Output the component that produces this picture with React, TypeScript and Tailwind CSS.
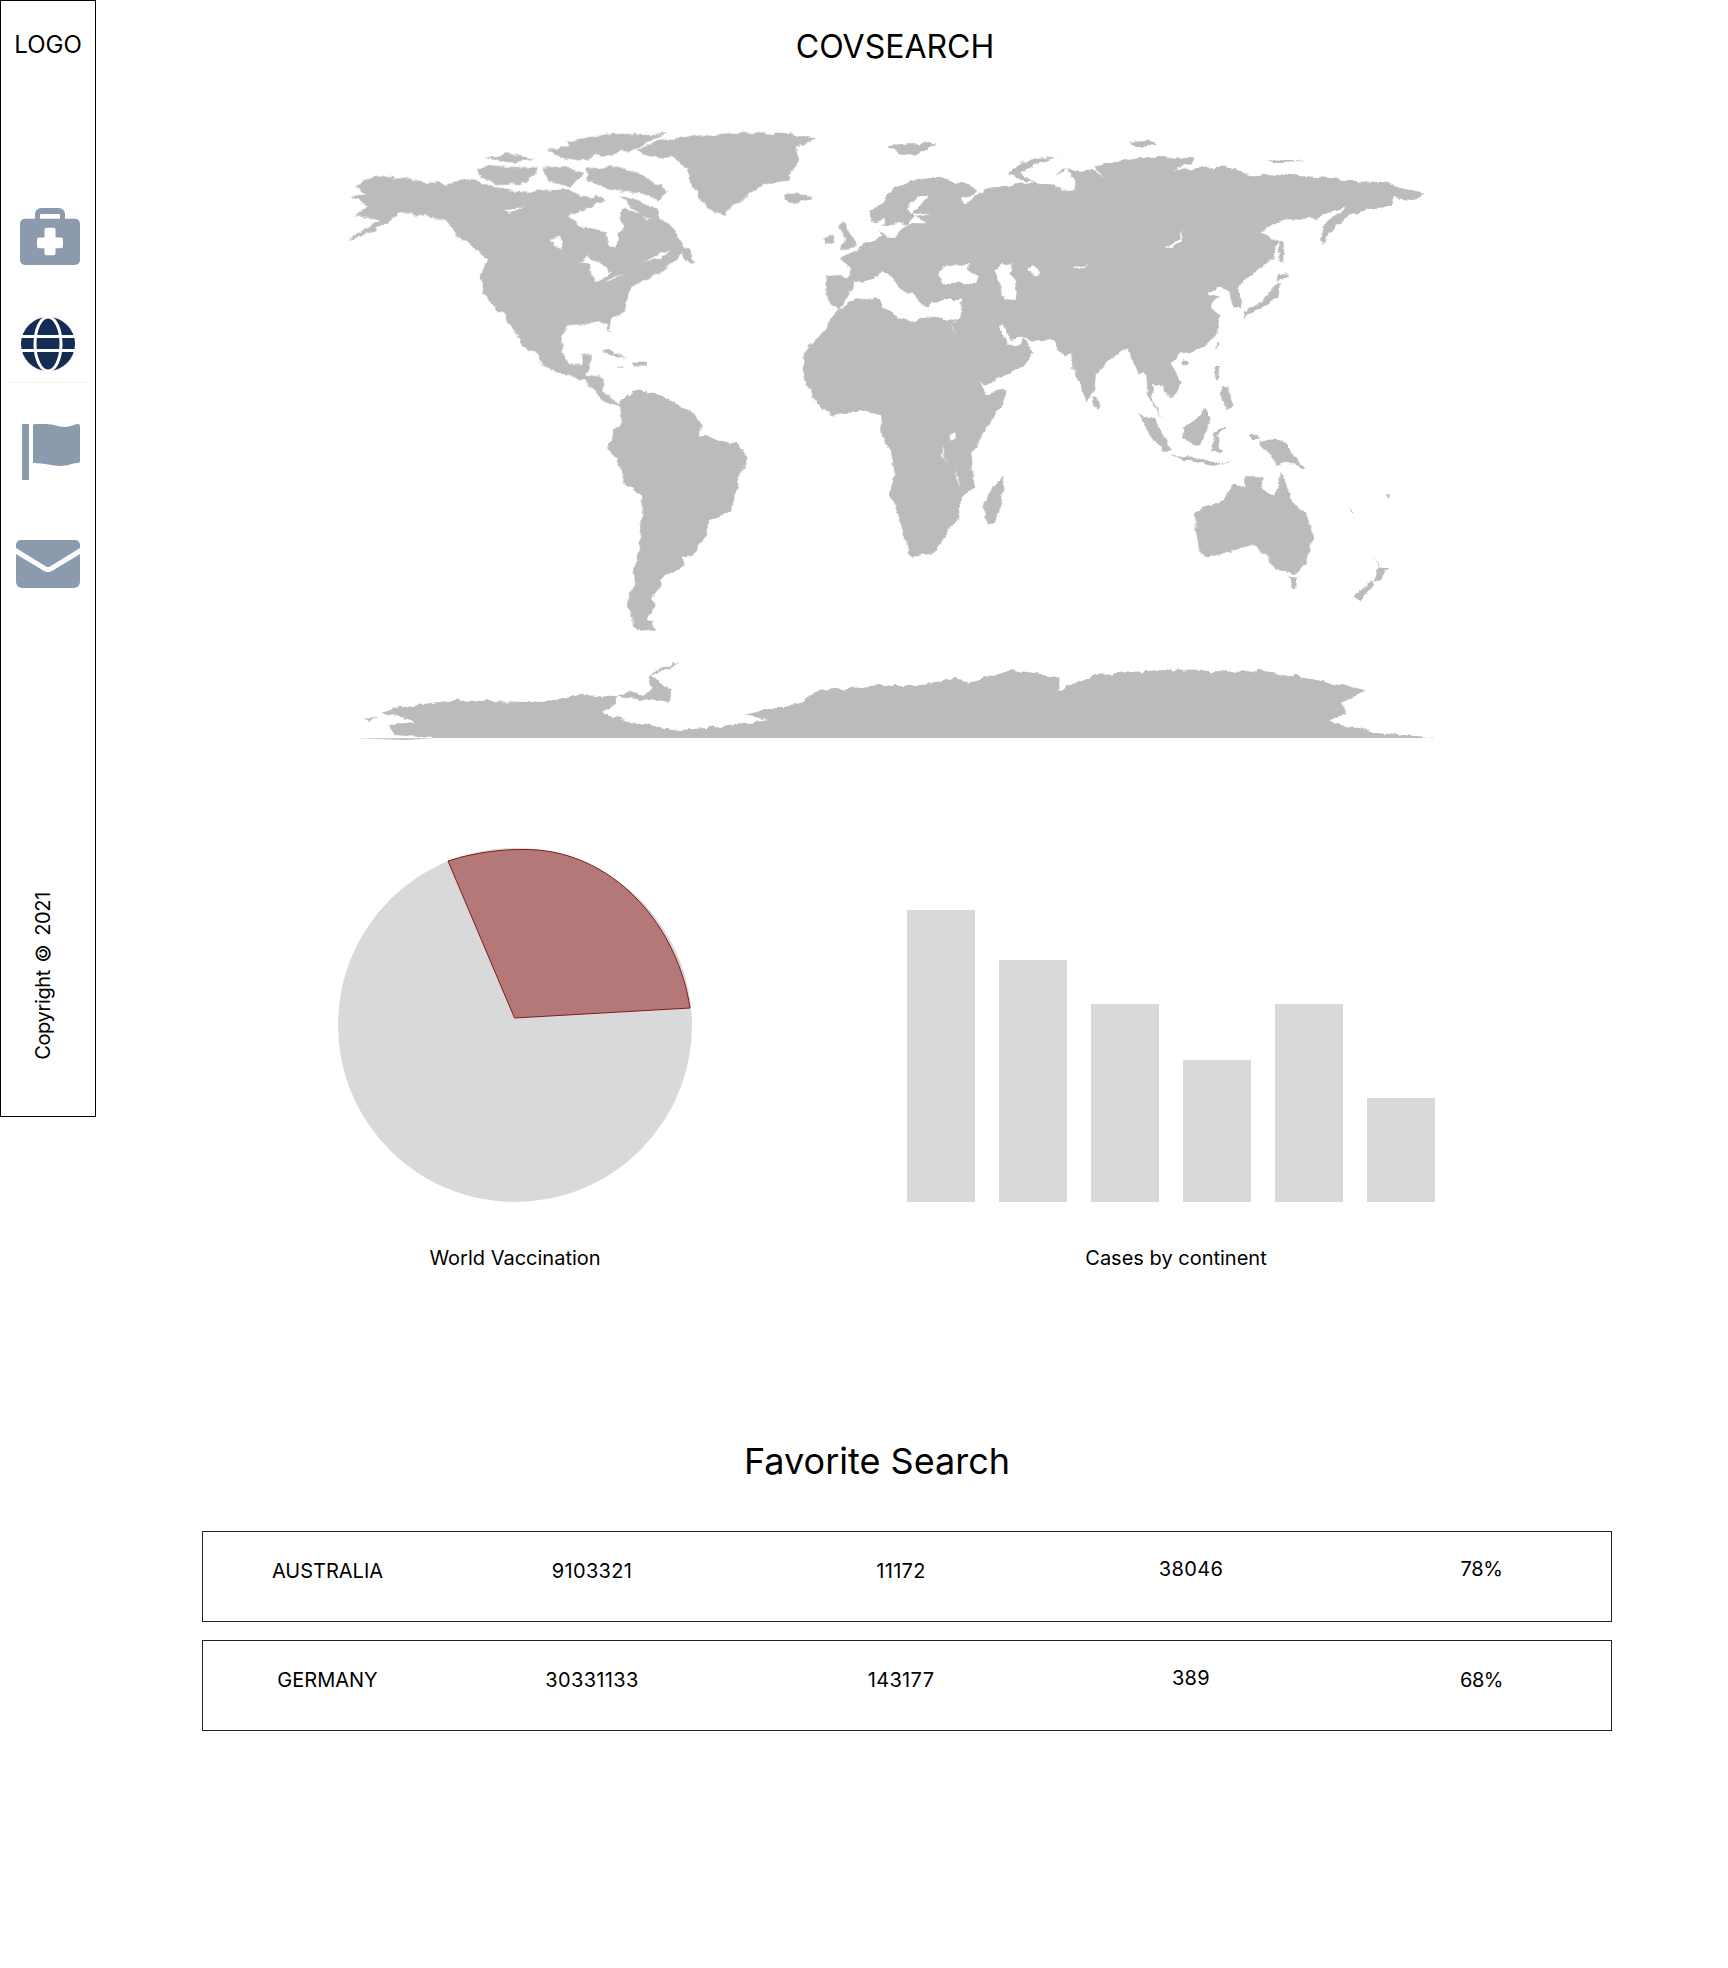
import React from 'react';

// all map shapes are in crop coordinates: 1 unit = 1/2.8px across, 1/3px down
const land = '#bbbbbb';

const northAmerica =
  'M100,225 L130,208 L180,197 L240,207 L345,222 L420,207 L470,225 L525,240 L590,245 L640,240 L680,238 L720,250 L755,265 L772,255 L800,272 L700,320 L722,345 L800,365 L810,400 L830,410 L835,375 L850,350 L840,320 L852,292 L900,310 L915,332 L945,315 L980,345 L1022,405 L1010,430 L1000,450 L960,470 L985,465 L940,490 L900,515 L870,530 L860,570 L855,600 L815,625 L810,660 L820,692 L800,640 L750,640 L690,650 L675,690 L685,740 L700,765 L735,765 L735,735 L762,735 L755,770 L745,795 L790,800 L795,845 L820,868 L845,880 L845,890 L815,880 L790,870 L770,840 L740,815 L700,795 L680,795 L620,765 L605,735 L575,715 L530,640 L512,610 L480,590 L455,545 L450,500 L465,450 L430,410 L385,380 L350,330 L300,318 L250,310 L220,310 L200,330 L150,365 L75,393 L130,355 L170,330 L100,315 L135,290 L85,260 L130,250 Z';

const arcticIslands = [
  'M440,185 L470,165 L520,170 L610,172 L600,195 L560,225 L500,225 L450,200 Z',
  'M465,145 L520,130 L600,145 L540,158 Z',
  'M625,172 L690,168 L735,195 L700,230 L640,215 Z',
  'M745,175 L830,170 L900,195 L975,245 L945,268 L900,250 L850,245 L790,230 L750,205 Z',
  'M640,120 L700,105 L770,125 L750,150 L690,150 Z',
  'M690,95 L800,72 L975,72 L930,90 L880,120 L790,140 L720,125 Z',
  'M835,255 L880,270 L925,290 L950,300 L945,325 L915,325 L880,295 Z',
  'M1005,415 L1040,420 L1050,458 L1015,450 Z',
];

const greenland =
  'M885,120 L950,92 L1040,78 L1170,68 L1310,72 L1390,85 L1335,110 L1340,145 L1310,210 L1240,225 L1180,270 L1130,315 L1085,295 L1055,250 L1035,205 L1030,175 L990,145 L920,138 Z';

const carib = [
  'M785,725 L810,718 L860,745 L835,740 L800,732 Z',
  'M870,755 L915,755 L915,770 L875,768 Z',
  'M835,768 L855,770 L850,773 L835,772 Z',
];

const britain = ['M1450,345 L1475,335 L1480,365 L1505,400 L1470,420 L1455,420 L1470,390 Z', 'M1412,385 L1440,370 L1445,395 L1410,408 Z', 'M1295,255 L1340,248 L1380,262 L1340,280 L1300,270 Z'];

const eurasia =
  'M-28,300 L0,285 L40,235 L90,212 L165,200 L230,220 L272,237 L262,255 L225,265 L240,278 L300,235 L330,230 L430,215 L490,225 L510,245 L548,240 L540,205 L520,175 L490,205 L510,175 L560,185 L600,180 L630,205 L600,170 L650,155 L760,140 L880,145 L870,160 L815,178 L960,170 L1010,180 L1035,200 L1110,192 L1270,205 L1290,212 L1400,215 L1480,240 L1522,252 L1500,268 L1440,262 L1432,290 L1380,295 L1310,315 L1290,340 L1260,365 L1240,412 L1236,350 L1305,292 L1260,305 L1220,328 L1150,325 L1100,345 L1065,372 L1115,390 L1105,440 L1060,480 L1020,510 L1003,540 L1015,590 L990,590 L980,545 L950,530 L915,550 L950,560 L925,590 L950,620 L945,670 L910,710 L860,730 L840,735 L815,760 L845,820 L810,870 L795,830 L765,825 L760,860 L802,950 L790,925 L750,860 L745,785 L725,795 L695,715 L650,745 L605,795 L600,840 L580,880 L540,770 L535,730 L515,740 L485,690 L430,695 L400,680 L430,725 L400,770 L290,825 L260,790 L200,645 L225,630 L230,570 L175,570 L120,590 L115,530 L130,525 L120,555 L135,590 L110,580 L85,530 L50,490 L85,525 L95,545 L75,555 L30,500 L5,485 L-30,510 L-70,520 L-90,560 L-120,600 L-150,565 L-150,500 L-85,497 L-85,475 L-115,445 L-75,425 L-40,400 L0,380 L10,325 L-10,340 L-28,335 Z';

const eurasiaWater = [
  'M160,495 L175,470 L215,465 L255,458 L240,475 L275,500 L270,522 L220,518 L175,520 Z',
  'M320,480 L345,460 L372,462 L365,490 L385,520 L380,570 L345,568 L338,530 Z',
  'M415,480 L430,462 L445,480 L432,497 Z',
  'M135,258 L110,258 L75,295 L100,320 L65,350 L45,380 L10,380 L0,345 L30,345 L75,340 L130,340 L105,320 L135,312 L90,310 Z',
  'M330,645 L345,640 L365,690 L400,680 L395,705 L360,705 L345,680 Z',
  'M800,408 L835,390 L850,362 L842,395 L810,412 Z',
  'M545,470 L590,462 L555,478 Z',
];

const asiaIslands = [
  'M20,105 L90,100 L155,100 L125,125 L65,135 L35,120 Z',
  'M695,92 L750,90 L770,105 L725,112 Z',
  'M360,190 L400,155 L505,135 L430,165 L395,195 L440,215 L395,210 Z',
  'M1080,148 L1190,155 L1110,160 Z',
  'M595,860 L605,860 L615,895 L602,902 Z',
  'M1118,390 L1130,400 L1133,465 L1118,450 Z',
  'M1115,490 L1145,495 L1110,515 Z',
  'M1105,525 L1120,520 L1115,565 L1075,590 L1030,610 L1020,630 L1018,605 L1070,575 Z',
  'M942,695 L950,700 L938,725 Z',
  'M848,750 L860,755 L850,768 L842,760 Z',
  'M940,768 L952,768 L950,810 L938,805 Z',
  'M955,825 L975,830 L990,890 L970,900 L955,860 Z',
  'M725,908 L770,930 L820,1025 L800,1025 L760,980 Z',
  'M815,1035 L880,1040 L940,1060 L990,1055 L930,1068 L860,1050 Z',
  'M845,950 L880,935 L910,895 L925,920 L915,965 L890,1010 L850,985 Z',
  'M935,965 L975,950 L945,975 L955,1025 L930,1025 Z',
  'M1030,975 L1055,975 L1058,990 L1035,990 Z',
  'M1060,995 L1095,985 L1145,1005 L1160,1040 L1190,1078 L1140,1055 L1110,1065 L1090,1030 Z',
];

const africa =
  'M0,915 L5,975 L30,1025 L42,1095 L25,1150 L50,1210 L80,1330 L90,1340 L150,1330 L200,1250 L225,1225 L218,1180 L265,1130 L255,1025 L300,950 L340,890 L355,840 L295,852 L285,825 L200,648 L215,630 L110,620 L90,638 L60,625 L10,590 L0,570 L-68,565 L-118,600 L-130,610 L-150,650 L-213,730 L-218,800 L-178,880 L-138,915 L-48,900 Z';

const africaWater = ['M195,975 L212,965 L215,985 L200,992 Z', 'M170,1000 L188,1060 L175,1030 Z', 'M212,1072 L222,1130 L214,1110 Z'];

const madagascar = 'M340,1097 L350,1130 L325,1240 L300,1242 L290,1195 L300,1150 Z';

const australia =
  'M882,1214 L910,1189 L950,1179 L990,1129 L1020,1126 L1025,1099 L1070,1099 L1075,1134 L1105,1159 L1125,1086 L1155,1174 L1195,1219 L1215,1279 L1190,1364 L1165,1389 L1105,1379 L1085,1334 L1045,1309 L1025,1309 L965,1329 L910,1344 L895,1329 L885,1264 Z';

const oceaniaBits = [
  'M1145,1399 L1170,1399 L1165,1434 L1155,1439 Z',
  'M1380,1344 L1400,1374 L1425,1374 L1400,1414 L1380,1409 L1395,1374 Z',
  'M1378,1409 L1385,1422 L1340,1474 L1328,1464 Z',
  'M1308,1189 L1330,1209 L1325,1209 Z',
  'M1418,1156 L1428,1156 L1425,1166 L1418,1164 Z',
];

const southAmerica =
  'M845,60 L860,45 L890,30 L905,35 L950,45 L985,65 L1045,95 L1070,135 L1060,170 L1085,165 L1125,185 L1170,190 L1200,235 L1170,295 L1165,340 L1150,395 L1090,420 L1080,465 L1045,525 L1010,530 L1015,565 L975,580 L950,600 L955,620 L930,655 L940,680 L915,715 L945,748 L900,752 L880,740 L860,680 L880,610 L875,570 L895,510 L905,350 L855,315 L830,240 L810,205 L818,150 L845,125 L840,80 Z';

const antarctica =
  'M325,1100 L325,1075 L210,1065 L190,1035 L270,1025 L170,995 L270,975 L360,962 L425,962 L560,965 L610,968 L730,945 L820,950 L920,960 L975,965 L985,935 L950,905 L930,885 L1015,845 L960,860 L920,890 L930,930 L900,945 L860,935 L840,950 L790,1000 L860,1025 L1005,1050 L1130,1040 L1255,1020 L1190,1005 L1260,985 L1340,970 L1395,930 L1480,925 L1568,915 L1668,915 L1778,897 L1818,908 L1938,870 L2078,890 L2063,935 L2098,915 L2188,882 L2358,870 L2578,875 L2628,870 L2818,905 L2928,930 L2863,970 L2868,1000 L2826,1022 L2968,1060 L3113,1072 L3113,1100 Z';

function WorldMap() {
  return (
    <svg viewBox="0 0 3136 1950" preserveAspectRatio="none" className="block w-[1120px] h-[650px]" fill={land}>
      <defs>
        <filter id="coast" filterUnits="userSpaceOnUse" x="0" y="0" width="3136" height="1950" colorInterpolationFilters="sRGB">
          <feTurbulence type="fractalNoise" baseFrequency="0.035" numOctaves="4" seed="7" result="noise" />
          <feDisplacementMap in="SourceGraphic" in2="noise" scale="20" xChannelSelector="R" yChannelSelector="G" />
        </filter>
        <clipPath id="mapBottom">
          <rect x="0" y="0" width="3136" height="1883" />
        </clipPath>
      </defs>
      <g clipPath="url(#mapBottom)">
        <g filter="url(#coast)">
          <path d={northAmerica} />
          {arcticIslands.map((d) => <path key={d} d={d} />)}
          <path d={greenland} />
          {carib.map((d) => <path key={d} d={d} />)}
          {britain.map((d) => <path key={d} d={d} />)}
          <g fill="#ffffff">
            <path d="M700,320 L760,285 L800,275 L850,292 L840,320 L850,350 L835,375 L830,410 L810,400 L800,365 L722,345 Z" />
            <path d="M725,460 L750,440 L790,465 L820,490 L800,500 L770,515 L760,490 L755,460 Z" />
            <path d="M795,515 L855,490 L820,510 Z" />
            <path d="M515,300 L575,288 L530,308 Z" />
            <path d="M900,455 L960,430 L985,420 L955,445 Z" />
            <path d="M650,385 L670,380 L680,420 L660,415 Z" />
          </g>
          <g transform="translate(1568,0)">
            <path d={eurasia} />
            {asiaIslands.map((d) => <path key={d} d={d} />)}
            <path d={africa} />
            <path d={madagascar} />
            <path d={australia} />
            {oceaniaBits.map((d) => <path key={d} d={d} />)}
            <g fill="#ffffff">
              {eurasiaWater.map((d) => <path key={d} d={d} />)}
              {africaWater.map((d) => <path key={d} d={d} />)}
            </g>
          </g>
          <g transform="translate(0,810)">
            <path d={southAmerica} />
            <path d={antarctica} />
            <path d="M118,1010 L160,1015 L140,1020 Z" />
          </g>
        </g>
      </g>
      <path transform="translate(0,810)" d="M97,1075 L240,1080 L325,1075 Z" />
    </svg>
  );
}

function MedicalIcon() {
  return (
    <svg viewBox="0 0 60 58" preserveAspectRatio="none" className="block w-[60px] h-[57px]" fill="#8c9aad">
      <path fillRule="evenodd" d="M15 11V6a6 6 0 0 1 6-6h18a6 6 0 0 1 6 6v5h10a5 5 0 0 1 5 5v37a5 5 0 0 1-5 5H5a5 5 0 0 1-5-5V16a5 5 0 0 1 5-5h10Zm5 0h20V7a1 1 0 0 0-1-1H21a1 1 0 0 0-1 1Z" />
      <path fill="#ffffff" d="M26.5 20h7a2 2 0 0 1 2 2v8h5.5a2 2 0 0 1 2 2v7a2 2 0 0 1-2 2h-5.5v5a2 2 0 0 1-2 2h-7a2 2 0 0 1-2-2v-5h-5.5a2 2 0 0 1-2-2v-7a2 2 0 0 1 2-2h5.5v-8a2 2 0 0 1 2-2Z" />
    </svg>
  );
}

function GlobeIcon() {
  return (
    <svg viewBox="0 0 54 54" className="block w-[54px] h-[54px]">
      <circle cx="27" cy="27" r="27" fill="#152c54" />
      <g fill="none" stroke="#ffffff" strokeWidth="3">
        <ellipse cx="27" cy="27" rx="13" ry="27" />
        <path d="M0 19.5h54M0 33.5h54" />
      </g>
    </svg>
  );
}

function FlagIcon() {
  return (
    <svg viewBox="0 0 58 56" className="block w-[58px] h-[56px]" fill="#8c9aad">
      <rect x="0" y="0" width="7" height="56" />
      <path d="M11 2Q11 0 13 0H24C32 0 36 3 43 3 49 3 52 0 56 0Q58 0 58 2V37Q58 39 55 39C50 39 47 42 38 42 30 42 24 39 11 39Z" />
    </svg>
  );
}

function MailIcon() {
  return (
    <svg viewBox="0 0 64 48" className="block w-[64px] h-[48px]" fill="#8c9aad">
      <path d="M0 5a5 5 0 0 1 5-5h54a5 5 0 0 1 5 5v3L34 26.5a4 4 0 0 1-4 0L0 8Z" />
      <path d="M0 14L28 31a8 8 0 0 0 8 0L64 14v28a6 6 0 0 1-6 6H6a6 6 0 0 1-6-6Z" />
    </svg>
  );
}

function Sidebar() {
  return (
    <aside className="w-[96px] h-[1117px] shrink-0 border border-black flex flex-col items-start">
      <div className="mt-[30px] self-center text-[24px] leading-[28px]">LOGO</div>
      <div className="mt-[149px] ml-[19px]"><MedicalIcon /></div>
      <div className="mt-[52px] ml-[20px]"><GlobeIcon /></div>
      <div className="mt-[11px] ml-[5px] w-[84px] h-px bg-[#f5f5f5]" />
      <div className="mt-[41px] ml-[21px]"><FlagIcon /></div>
      <div className="mt-[60px] ml-[15px]"><MailIcon /></div>
      <div className="mt-[304px] ml-[30px] text-[20px] leading-6 tracking-[-0.35px] whitespace-nowrap [writing-mode:vertical-rl] rotate-180">
        Copyright © 2021
      </div>
    </aside>
  );
}

const barHeights = [292, 242, 198, 142, 198, 104];

function BarChart() {
  return (
    <div className="flex items-end gap-[24px] h-[292px]">
      {barHeights.map((h, i) => (
        <div key={i} className="w-[68px] bg-[#d9d9d9]" style={{ height: h }} />
      ))}
    </div>
  );
}

function PieChart() {
  return (
    <svg viewBox="0 0 354 354" className="block w-[354px] h-[354px]">
      <circle cx="177" cy="177" r="177" fill="#d9d9d9" />
      <path
        d="M176.5 170 L110 13 C140 3 175 0 200 2 C280 9 340 80 352 160 Z"
        fill="#b57878"
        stroke="#7c1d1d"
        strokeWidth="1"
      />
    </svg>
  );
}

const rows = [
  ['AUSTRALIA', '9103321', '11172', '38046', '78%'],
  ['GERMANY', '30331133', '143177', '389', '68%'],
];

function FavoriteRow({ cells, lifted }: { cells: string[]; lifted: number[] }) {
  return (
    <div className="h-[91px] border border-[#222222] grid grid-cols-[249px_280px_338px_242px_298px] pt-[27px] text-[20px] leading-6 text-center">
      {cells.map((c, i) => (
        <div
          key={c}
          className={`${lifted.includes(i) ? '-mt-[2px]' : ''} ${i > 0 && i < 4 ? 'tracking-[0.35px]' : ''} ${i === 4 ? 'pl-[41px] tracking-[-0.4px]' : ''}`}
        >
          {c}
        </div>
      ))}
    </div>
  );
}

export default function App() {
  return (
    <div className="w-[1728px] h-[1968px] flex bg-white text-black font-['Inter',sans-serif]">
      <Sidebar />
      <main className="flex-1 flex flex-col">
        <h1 className="mt-[27px] ml-[599px] w-[400px] text-center text-[32px] leading-[40px]">COVSEARCH</h1>
        <div className="mt-[43px] ml-[224px]"><WorldMap /></div>
        <section className="mt-[88px] ml-[242px] flex items-end">
          <div className="w-[354px] flex flex-col items-center">
            <PieChart />
            <div className="mt-[44px] text-[20px] leading-6 whitespace-nowrap">World Vaccination</div>
          </div>
          <div className="ml-[215px] w-[528px] flex flex-col items-center">
            <BarChart />
            <div className="mt-[44px] ml-[10px] text-[20px] leading-6 whitespace-nowrap">Cases by continent</div>
          </div>
        </section>
        <h2 className="mt-[169px] ml-[106px] w-[1350px] text-center text-[36px] leading-[44px]">Favorite Search</h2>
        <div className="mt-[48px] ml-[106px] w-[1410px] flex flex-col gap-[18px]">
          <FavoriteRow cells={rows[0]} lifted={[3, 4]} />
          <FavoriteRow cells={rows[1]} lifted={[3]} />
        </div>
      </main>
    </div>
  );
}
